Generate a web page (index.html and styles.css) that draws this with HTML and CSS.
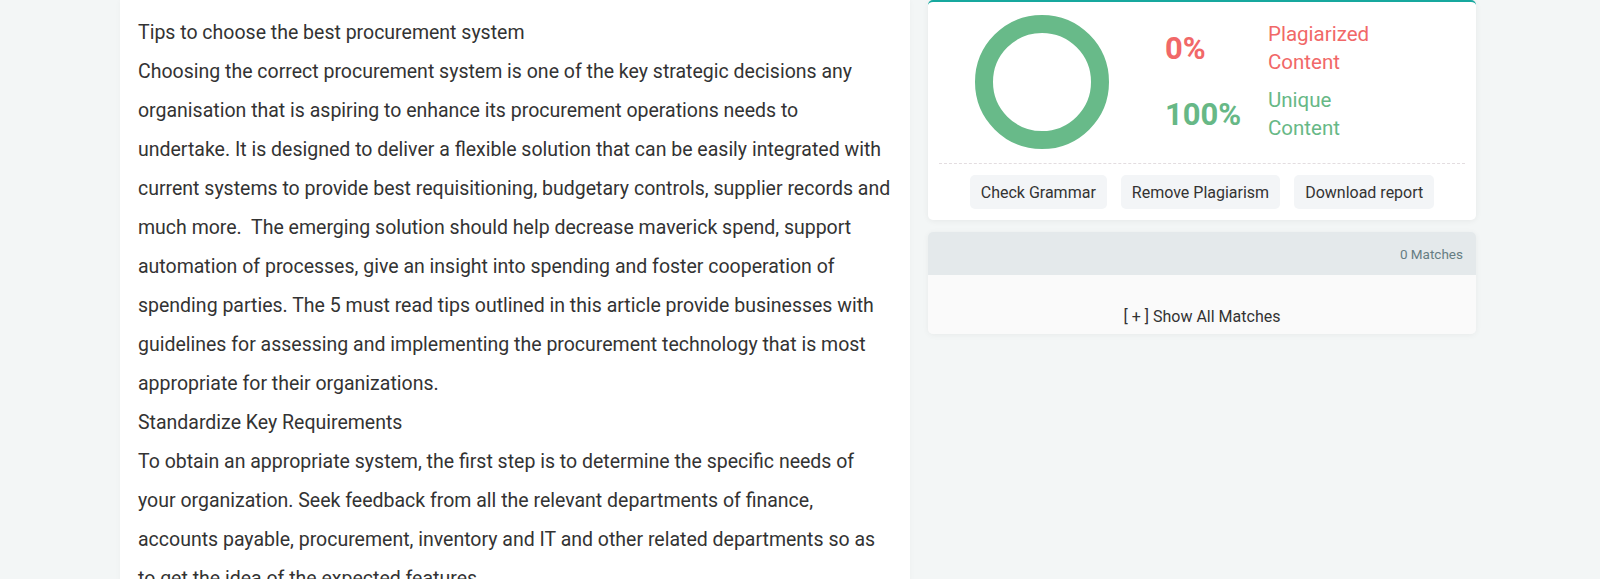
FILE: index.html
```html
<!DOCTYPE html>
<html lang="en">
<head>
  <meta charset="UTF-8" />
  <meta name="viewport" content="width=device-width, initial-scale=1.0" />
  <title>Plagiarism Report</title>
  <link rel="stylesheet" href="styles.css">
</head>
<body>
  <div class="page">
    <div class="article">
      <p>Tips to choose the best procurement system</p>
      <p>Choosing the correct procurement system is one of the key strategic decisions any organisation that is aspiring to enhance its procurement operations needs to undertake. It is designed to deliver a flexible solution that can be easily integrated with current systems to provide best requisitioning, budgetary controls, supplier records and much more.&nbsp; The emerging solution should help decrease maverick spend, support automation of processes, give an insight into spending and foster cooperation of spending parties. The 5 must read tips outlined in this article provide businesses with guidelines for assessing and implementing the procurement technology that is most appropriate for their organizations.</p>
      <p>Standardize Key Requirements</p>
      <p>To obtain an appropriate system, the first step is to determine the specific needs of your organization. Seek feedback from all the relevant departments of finance, accounts payable, procurement, inventory and IT and other related departments so as to get the idea of the expected features.</p>
    </div>

    <div class="sidebar">
      <div class="result-card">
        <div class="result-top">
          <div class="donut-wrap">
            <svg width="134" height="134" viewBox="0 0 134 134">
              <circle cx="67" cy="67" r="58" fill="none" stroke="#68ba89" stroke-width="18" />
            </svg>
          </div>
          <div class="stats">
            <div class="stat plag">
              <span class="stat-num">0%</span>
              <span class="stat-label">Plagiarized<br>Content</span>
            </div>
            <div class="stat unique">
              <span class="stat-num">100%</span>
              <span class="stat-label">Unique<br>Content</span>
            </div>
          </div>
        </div>
        <div class="actions">
          <button type="button" class="btn">Check Grammar</button>
          <button type="button" class="btn">Remove Plagiarism</button>
          <button type="button" class="btn">Download report</button>
        </div>
      </div>

      <div class="matches">
        <div class="matches-head">0 Matches</div>
        <div class="matches-body">[ + ] Show All Matches</div>
      </div>
    </div>
  </div>
</body>
</html>
```

FILE: styles.css
```css
html, body {
  height: 100%;
  overflow: hidden;
}

body {
  margin: 0;
  background: #f3f6f6;
  font-family: Roboto, 'Liberation Sans', sans-serif;
  color: #333;
}

.page {
  display: flex;
  align-items: flex-start;
  gap: 18px;
  padding-left: 120px;
}

.article {
  width: 790px;
  box-sizing: border-box;
  background: #ffffff;
  padding: 13px 18px 40px;
  min-height: 700px;
  box-shadow: 0 0 6px rgba(0,0,0,0.03);
}

.article p {
  margin: 0;
  font-size: 19.5px;
  line-height: 39px;
  color: #333;
}

.sidebar {
  width: 548px;
  display: flex;
  flex-direction: column;
  gap: 12px;
}

.result-card {
  background: #ffffff;
  border-top: 2px solid #17a89e;
  border-radius: 5px;
  box-shadow: 0 1px 6px rgba(0,0,0,0.06);
  padding: 0 11px 11px;
}

.result-top {
  display: flex;
  align-items: center;
  height: 161px;
  border-bottom: 1px dashed #e3dde0;
}

.donut-wrap {
  width: 134px;
  margin-left: 36px;
  display: flex;
  margin-top: -2px;
}

.stats {
  margin-left: 56px;
  display: flex;
  flex-direction: column;
  gap: 10px;
  margin-top: -3px;
}

.stat {
  display: flex;
  align-items: center;
}

.stat-num {
  width: 103px;
  font-size: 31px;
  font-weight: 700;
}

.stat-label {
  font-size: 20.5px;
  line-height: 28px;
}

.plag { color: #f16868; }
.unique { color: #67b886; }

.actions {
  display: flex;
  justify-content: center;
  gap: 14px;
  padding-top: 11px;
}

.btn {
  height: 34px;
  padding: 0 11px;
  border: none;
  border-radius: 5px;
  background: #f3f5f7;
  color: #333;
  font-family: Roboto, 'Liberation Sans', sans-serif;
  font-size: 16px;
}

.matches {
  border-radius: 5px;
  overflow: hidden;
  box-shadow: 0 1px 6px rgba(0,0,0,0.05);
}

.matches-head {
  height: 43px;
  background: #e4e9eb;
  display: flex;
  align-items: center;
  justify-content: flex-end;
  padding-right: 13px;
  font-size: 13.5px;
  color: #667d83;
}

.matches-body {
  height: 59px;
  background: #fafafa;
  text-align: center;
  font-size: 16px;
  line-height: 18px;
  padding-top: 33px;
  box-sizing: border-box;
}
```
